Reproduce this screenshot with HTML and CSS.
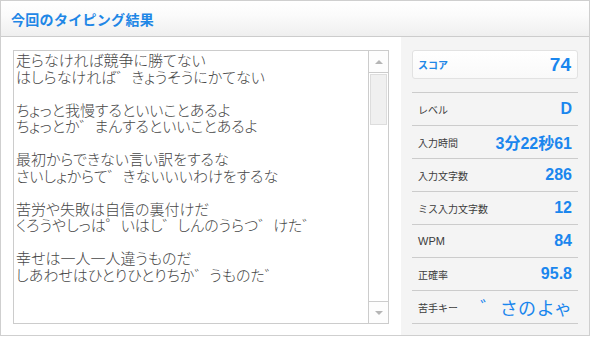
FILE: index.html
```html
<!DOCTYPE html>
<html lang="ja">
<head>
    <meta charset="utf-8">
    <link rel="stylesheet" href="styles.css">
</head>
<body>
    <div class="result-frame">
        <div class="result-header">
            <h1>今回のタイピング結果</h1>
        </div>

        <div class="result-body">
            <div class="text-area">
                <div class="text-content">
                    <p>走らなければ競争に勝てない</p>
                    <p>はしらなければ゛きょうそうにかてない</p>
                    <p>&nbsp;</p>
                    <p>ちょっと我慢するといいことあるよ</p>
                    <p>ちょっとか゛まんするといいことあるよ</p>
                    <p>&nbsp;</p>
                    <p>最初からできない言い訳をするな</p>
                    <p>さいしょからて゛きないいいわけをするな</p>
                    <p>&nbsp;</p>
                    <p>苦労や失敗は自信の裏付けだ</p>
                    <p>くろうやしっは゜いはし゛しんのうらつ゛けた゛</p>
                    <p>&nbsp;</p>
                    <p>幸せは一人一人違うものだ</p>
                    <p>しあわせはひとりひとりちか゛うものた゛</p>
                </div>
                <div class="scrollbar">
                    <div class="scroll-btn"><span class="arrow-up"></span></div>
                    <div class="scroll-track">
                        <div class="scroll-thumb"></div>
                    </div>
                    <div class="scroll-btn"><span class="arrow-down"></span></div>
                </div>
            </div>

            <div class="score-panel">
                <div class="score-box">
                    <span class="score-label">スコア</span>
                    <span class="score-value">74</span>
                </div>
                <ul class="stat-list">
                    <li><span class="stat-label">レベル</span><span class="stat-value">D</span></li>
                    <li><span class="stat-label">入力時間</span><span class="stat-value">3分22秒61</span></li>
                    <li><span class="stat-label">入力文字数</span><span class="stat-value">286</span></li>
                    <li><span class="stat-label">ミス入力文字数</span><span class="stat-value">12</span></li>
                    <li><span class="stat-label stat-label-en">WPM</span><span class="stat-value">84</span></li>
                    <li><span class="stat-label">正確率</span><span class="stat-value">95.8</span></li>
                    <li><span class="stat-label">苦手キー</span><span class="stat-value weak-keys">゛さのよゃ</span></li>
                </ul>
            </div>
        </div>
    </div>
</body>
</html>
```

FILE: styles.css
```css
body {
    margin: 0;
    font-family: "Liberation Sans", "Noto Sans CJK JP", sans-serif;
    background: #ffffff;
}

.result-frame {
    width: 588px;
    height: 334px;
    border: 1px solid #cfcfcf;
    display: flex;
    flex-direction: column;
    overflow: hidden;
}

.result-header {
    height: 35px;
    border-bottom: 1px solid #cccccc;
    background: linear-gradient(to bottom, #ffffff 0%, #fbfbfb 40%, #efefef 100%);
    display: flex;
    align-items: center;
    padding-left: 10px;
}

.result-header h1 {
    margin: 0;
    font-family: "Noto Sans CJK JP", sans-serif;
    font-size: 14px;
    font-weight: bold;
    color: #1f87e6;
    letter-spacing: 0.3px;
}

.result-body {
    flex: 1;
    display: flex;
}

/* left: the typed text */
.text-area {
    margin: 13px 0 0 12px;
    width: 374px;
    height: 272px;
    border: 1px solid #cccccc;
    display: flex;
    background: #ffffff;
}

.text-content {
    flex: 1;
    padding: 1px 0 0 2px;
    font-family: "Noto Sans CJK JP", sans-serif;
    font-size: 15px;
    font-weight: 300;
    font-feature-settings: "palt";
    line-height: 16.5px;
    color: #474747;
    overflow: hidden;
}

.text-content p {
    margin: 0;
    white-space: nowrap;
}

.scrollbar {
    width: 19px;
    border-left: 1px solid #cccccc;
    display: flex;
    flex-direction: column;
}

.scroll-btn {
    height: 21px;
    display: flex;
    align-items: center;
    justify-content: center;
    background: #fdfdfd;
}

.scroll-btn:first-child {
    border-bottom: 1px solid #cccccc;
}

.scroll-btn:last-child {
    border-top: 1px solid #cccccc;
}

.arrow-up,
.arrow-down {
    width: 0;
    height: 0;
    border-left: 4px solid transparent;
    border-right: 4px solid transparent;
}

.arrow-up {
    border-bottom: 4px solid #b5b5b5;
}

.arrow-down {
    border-top: 4px solid #b5b5b5;
}

.scroll-track {
    flex: 1;
    padding: 1px 1px 0 1px;
}

.scroll-thumb {
    height: 49px;
    background: #f0f0f0;
    border: 1px solid #dddddd;
}

/* right: the score panel */
.score-panel {
    margin-left: 12px;
    flex: 1;
    background: #f4f4f4;
    padding: 13px 11px 0 11px;
}

.score-box {
    height: 27px;
    border: 1px solid #e2e2e2;
    border-radius: 3px;
    background: linear-gradient(to bottom, #ffffff 0%, #f9f9f9 100%);
    display: flex;
    align-items: center;
    justify-content: space-between;
    padding: 0 6px 0 5px;
    margin-bottom: 13px;
}

.score-label {
    font-family: "Noto Sans CJK JP", sans-serif;
    font-size: 10px;
    font-weight: bold;
    color: #1f87e6;
}

.score-value {
    font-size: 19px;
    font-weight: bold;
    color: #1a86ee;
}

.stat-list {
    list-style: none;
    margin: 0;
    padding: 0;
    border-top: 1px solid #cccccc;
}

.stat-list li {
    height: 32px;
    border-bottom: 1px solid #cccccc;
    display: flex;
    align-items: center;
    justify-content: space-between;
    padding: 0 6px 0 6px;
}

.stat-label {
    font-family: "Noto Sans CJK JP", sans-serif;
    font-size: 10px;
    color: #3c3c3c;
}

.stat-label-en {
    font-family: "Liberation Sans", sans-serif;
    font-size: 11px;
}

.stat-value {
    font-size: 16px;
    font-weight: bold;
    color: #1a86ee;
}

.weak-keys {
    font-family: "Noto Sans CJK JP", sans-serif;
    font-weight: normal;
    font-size: 18px;
    font-feature-settings: "palt";
    letter-spacing: 2px;
}
```
